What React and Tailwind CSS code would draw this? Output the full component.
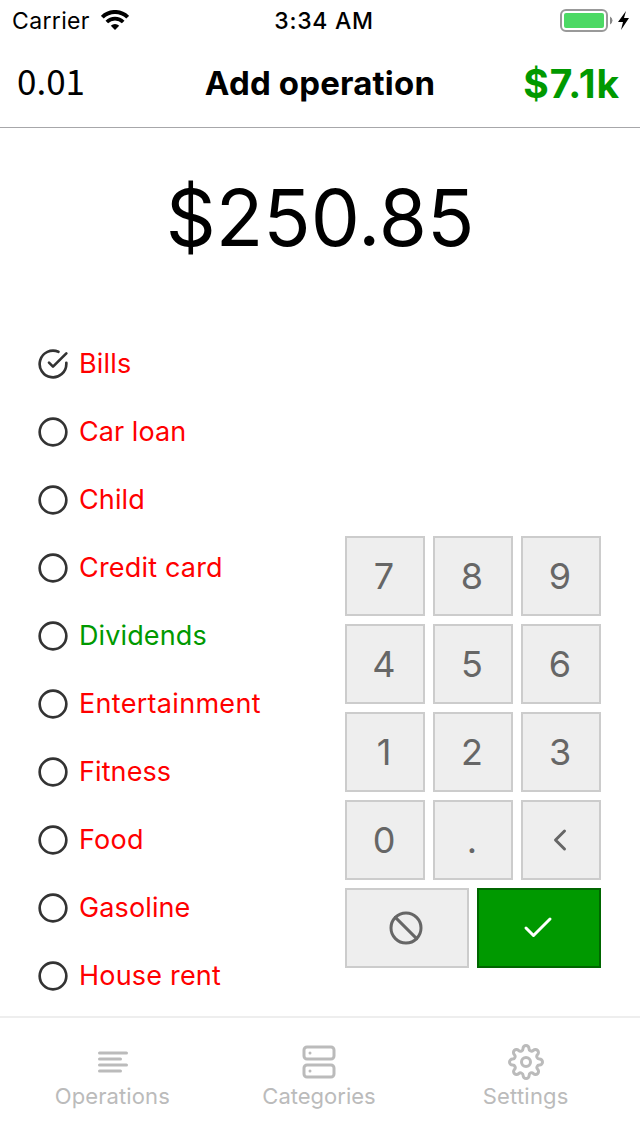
import { FiAlignLeft, FiCheck, FiChevronLeft, FiServer, FiSettings, FiSlash } from "react-icons/fi";

const categories = [
  { name: "Bills", checked: true, spacing: "tracking-[0.2px]" },
  { name: "Car loan", spacing: "tracking-[0.05px]" },
  { name: "Child", spacing: "tracking-[0.1px]" },
  { name: "Credit card", spacing: "tracking-[0.18px]" },
  { name: "Dividends", income: true, spacing: "tracking-[0.12px]" },
  { name: "Entertainment", spacing: "tracking-[0.3px]" },
  { name: "Fitness", spacing: "tracking-[0.1px]" },
  { name: "Food", spacing: "tracking-[0.25px]" },
  { name: "Gasoline", spacing: "tracking-[0.12px]" },
  { name: "House rent", spacing: "tracking-[0.2px]" },
];

const digits = ["7", "8", "9", "4", "5", "6", "1", "2", "3", "0", "."];

const keyClass =
  "flex h-20 items-center justify-center border-2 border-[#cccccc] bg-[#eeeeee] pr-[2px] text-[36px] leading-none text-[#666666]";

function Radio({ checked }) {
  return (
    <svg
      className="mt-px size-8 shrink-0 text-[#333333]"
      viewBox="0 0 24 24"
      fill="none"
      stroke="currentColor"
      strokeWidth="2"
      strokeLinecap="round"
      strokeLinejoin="round"
    >
      {checked ? (
        <>
          <path d="M22 11.07V12a10 10 0 1 1-5.93-9.14" />
          <polyline points="22 4 12 14 9 11" />
        </>
      ) : (
        <circle cx="12" cy="12" r="10" />
      )}
    </svg>
  );
}

function StatusBar() {
  return (
    <div className="grid h-10 grid-cols-3 items-center pr-[9px] pl-3 text-[23px] leading-none">
      <div className="flex items-center gap-[11px]">
        <span className="pt-[2px] tracking-[0.35px]">Carrier</span>
        <svg className="h-5 w-7" viewBox="0 0 28 20" fill="none" stroke="#000">
          <path d="M1.3 7.2a18 18 0 0 1 25.4 0" strokeWidth="4" />
          <path d="M5.8 12a11.6 11.6 0 0 1 16.4 0" strokeWidth="3.7" />
          <path d="M14 20l-4.2-4.2a6 6 0 0 1 8.4 0z" fill="#000" stroke="none" />
        </svg>
      </div>
      <span className="pt-[2px] pl-[5px] text-center font-medium tracking-[0.7px]">3:34 AM</span>
      <svg className="h-6 w-[72px] justify-self-end" viewBox="0 0 72 24">
        <rect x="2" y="2" width="46" height="21" rx="5" fill="none" stroke="#999" strokeWidth="2" />
        <rect x="5" y="5" width="40" height="15" rx="2" fill="#4cd964" />
        <path d="M51 8.5q2.5 1.5 2.5 4t-2.5 4z" fill="#888" />
        <path d="M67 3l-8 11h5l-2 8 8-12h-5z" fill="#000" />
      </svg>
    </div>
  );
}

function Tab({ icon: Icon, label, spacing, shift = "" }) {
  return (
    <div className="flex flex-1 flex-col items-center text-[#bbbbbb]">
      <Icon className={"size-9 " + shift} />
      <span className={"mt-[3px] text-[22px] leading-[26px] " + spacing}>{label}</span>
    </div>
  );
}

export default function App() {
  return (
    <div className="flex h-[1136px] w-[640px] flex-col overflow-hidden bg-white font-['Inter',sans-serif] text-black">
      <StatusBar />
      <header className="grid h-[88px] grid-cols-[170px_1fr_170px] items-center border-b border-[#a7a7aa]">
        <span className="pb-[9px] pl-[17px] font-['Noto_Sans_CJK_SC',sans-serif] text-[35px] leading-none">0.01</span>
        <h1 className="text-center text-[33px] leading-none font-bold tracking-[0.18px]">Add operation</h1>
        <span className="pr-[20px] text-right text-[39px] leading-none font-bold tracking-[0.9px] text-[#009900]">
          $7.1k
        </span>
      </header>

      <div className="flex h-[180px] items-center justify-center text-[78px] leading-none">$250.85</div>

      <main className="flex flex-1 items-start justify-between pr-[39px] pl-[37px]">
        <ul className="pt-[21px]">
          {categories.map((c) => (
            <li key={c.name} className="flex h-[68px] items-center gap-[10px]">
              <Radio checked={c.checked} />
              <span
                className={
                  "text-[27px] leading-none " + c.spacing + (c.income ? " text-[#009900]" : " text-[#ff0000]")
                }
              >
                {c.name}
              </span>
            </li>
          ))}
        </ul>
        <div className="mt-[228px] grid w-64 grid-cols-6 gap-2">
          {digits.map((d) => (
            <button key={d} className={"col-span-2 " + keyClass}>
              {d}
            </button>
          ))}
          <button className={"col-span-2 " + keyClass}>
            <FiChevronLeft />
          </button>
          <button className={"col-span-3 " + keyClass}>
            <FiSlash />
          </button>
          <button className="col-span-3 flex h-20 items-center justify-center border-2 border-[#006600] bg-[#009900] pr-[2px] text-[36px] text-white">
            <FiCheck />
          </button>
        </div>
      </main>

      <nav className="flex h-[120px] border-t-2 border-[#eeeeee] bg-white pt-[26px] pr-[11px] pl-[9px]">
        <Tab icon={FiAlignLeft} label="Operations" spacing="tracking-[0.12px]" shift="ml-[2px]" />
        <Tab icon={FiServer} label="Categories" spacing="tracking-[0px]" />
        <Tab icon={FiSettings} label="Settings" spacing="tracking-[0.2px]" />
      </nav>
    </div>
  );
}
